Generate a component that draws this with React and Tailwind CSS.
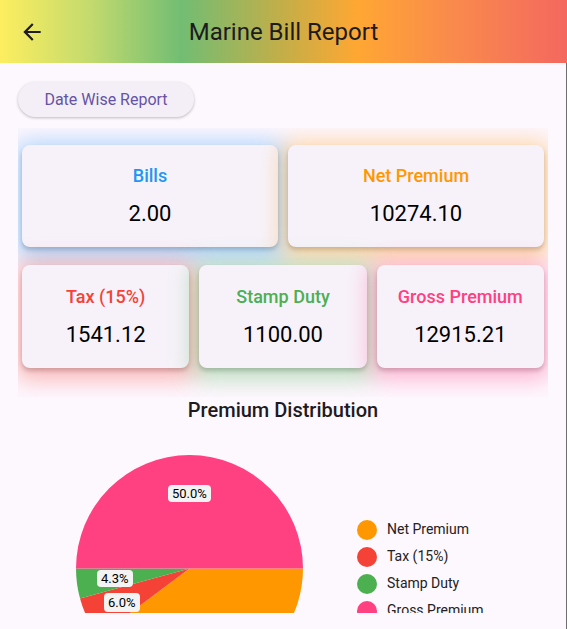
import React from 'react';

// --- DATA ---
const topCards = [
  { label: 'Bills', value: '2.00', color: 'text-[#2196F3]', glow: 'shadow-[0_4px_22px_8px_rgba(33,150,243,0.34),0_3px_4px_rgba(0,0,0,0.22)]' },
  { label: 'Net Premium', value: '10274.10', color: 'text-[#FF9800]', glow: 'shadow-[0_4px_22px_8px_rgba(255,152,0,0.34),0_3px_4px_rgba(0,0,0,0.22)]' },
];

const bottomCards = [
  { label: 'Tax (15%)', value: '1541.12', color: 'text-[#F44336]', glow: 'shadow-[0_4px_22px_8px_rgba(244,67,54,0.34),0_3px_4px_rgba(0,0,0,0.22)]' },
  { label: 'Stamp Duty', value: '1100.00', color: 'text-[#4CAF50]', glow: 'shadow-[0_4px_22px_8px_rgba(76,175,80,0.34),0_3px_4px_rgba(0,0,0,0.22)]' },
  { label: 'Gross Premium', value: '12915.21', color: 'text-[#FF4081]', glow: 'shadow-[0_4px_22px_8px_rgba(255,64,129,0.34),0_3px_4px_rgba(0,0,0,0.22)]' },
];

const legend = [
  { label: 'Net Premium', dot: 'bg-[#FF9800]' },
  { label: 'Tax (15%)', dot: 'bg-[#F44336]' },
  { label: 'Stamp Duty', dot: 'bg-[#4CAF50]' },
  { label: 'Gross Premium', dot: 'bg-[#FF4081]' },
];

const StatCard = ({ label, value, color, glow, className }) => (
  <div className={`bg-[#f7f2fa] rounded-lg flex flex-col items-center justify-center gap-[12px] ${glow} ${className}`}>
    <span className={`text-[18px] leading-6 font-medium ${color}`}>{label}</span>
    <span className="text-[22px] leading-7 font-normal text-black">{value}</span>
  </div>
);

const PieChart = () => (
  <div className="relative w-[227px] h-[227px] shrink-0">
    <svg width="227" height="227" viewBox="0 0 227 227">
      <path d="M113.5 113.5 L227 113.5 A113.5 113.5 0 0 1 22.62 181.5 Z" fill="#FF9800" />
      <path d="M113.5 113.5 L22.62 181.5 A113.5 113.5 0 0 1 4.04 143.51 Z" fill="#F44336" />
      <path d="M113.5 113.5 L4.04 143.51 A113.5 113.5 0 0 1 0 113.5 Z" fill="#4CAF50" />
      <path d="M113.5 113.5 L0 113.5 A113.5 113.5 0 0 1 227 113.5 Z" fill="#FF4081" />
    </svg>
    <span className="absolute left-[92px] top-[30px] h-[17px] px-[4px] rounded-[4px] bg-[#f3f3f3] text-[13px] leading-[17px] text-black">50.0%</span>
    <span className="absolute left-[21px] top-[115px] h-[17px] px-[4px] rounded-[4px] bg-[#f3f3f3] text-[13px] leading-[17px] text-black">4.3%</span>
    <span className="absolute left-[28px] top-[138px] h-[19px] px-[4px] rounded-[4px] bg-[#f3f3f3] text-[13px] leading-[19px] text-black">6.0%</span>
  </div>
);

export default function App() {
  return (
    <div className="w-[567px] h-[629px] overflow-hidden bg-[#fdf7fe] font-['Roboto',sans-serif] text-[#1d1b20]">
      {/* --- APP BAR --- */}
      <header className="relative h-[63px] flex items-center justify-center bg-[linear-gradient(90deg,#fdee5f_0%,#c3da6e_16%,#72bd73_32%,#c4ae48_50%,#ffa733_63%,#f98a4c_80%,#f4685f_100%)]">
        <svg className="absolute left-[19px] top-[19px]" width="26" height="26" viewBox="0 0 24 24" fill="#1d1b20">
          <path d="M20 11H7.83l5.59-5.59L12 4l-8 8 8 8 1.41-1.41L7.83 13H20v-2z" />
        </svg>
        <h1 className="text-[24px] leading-8 font-normal">Marine Bill Report</h1>
      </header>

      <div className="h-[566px] border-r border-[#6e6e6e]">
        {/* --- DATE BUTTON --- */}
        <div className="pt-[19px] pl-[18px]">
          <button className="w-[176px] h-[35px] rounded-full bg-[#f4eff7] text-[16px] text-[#6553a6] shadow-[0_1px_3px_rgba(0,0,0,0.25)]">
            Date Wise Report
          </button>
        </div>

        {/* --- SUMMARY CARDS --- */}
        <div className="mt-[11px] mx-[18px] px-1 pt-[17px] pb-[29px] overflow-hidden flex flex-col gap-[18px]">
          <div className="flex gap-[10px]">
            {topCards.map((c) => (
              <StatCard key={c.label} {...c} className="flex-1 h-[102px]" />
            ))}
          </div>
          <div className="flex gap-[10px]">
            {bottomCards.map((c) => (
              <StatCard key={c.label} {...c} className="flex-1 h-[103px]" />
            ))}
          </div>
        </div>

        {/* --- CHART --- */}
        <h2 className="mt-[1px] text-center text-[20px] leading-6 font-medium">Premium Distribution</h2>
        <div className="h-[191px] overflow-hidden">
          <div className="mt-[33px] pl-[76px] flex items-center">
            <PieChart />
            <div className="ml-[54px] mt-[3px] flex flex-col gap-[7px]">
              {legend.map((l) => (
                <div key={l.label} className="flex items-center gap-[10px] h-5">
                  <span className={`w-5 h-5 rounded-full ${l.dot}`} />
                  <span className="text-[14px] text-[#222]">{l.label}</span>
                </div>
              ))}
            </div>
          </div>
        </div>
      </div>
    </div>
  );
}
